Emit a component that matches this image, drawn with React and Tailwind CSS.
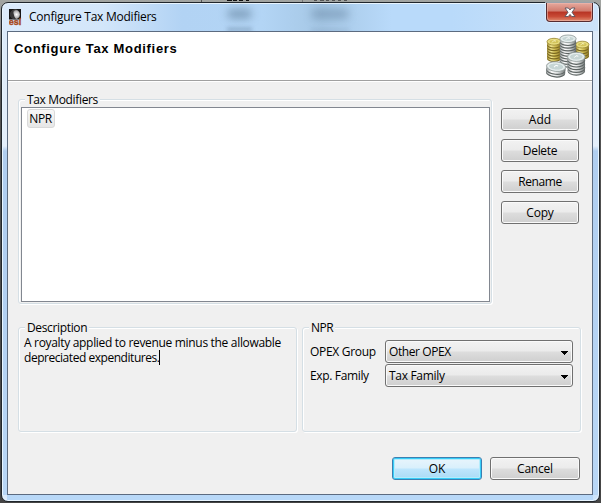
import React from "react";

const FONT = "font-['Open_Sans','Noto_Sans',sans-serif] text-[12px] leading-[15px] text-black whitespace-nowrap";

function Button({ children, className = "", primary = false, text = "" }) {
  const look = primary
    ? "border-[#3c7fb1] bg-[linear-gradient(#e9f5fc_0%,#d9f0fc_48%,#bee6fd_52%,#a9dbf5_100%)] shadow-[inset_0_0_0_1px_#37cdf8,inset_0_0_0_2px_#b4ecfc]"
    : "border-[#707070] bg-[linear-gradient(#f2f2f2_0%,#ebebeb_48%,#dddddd_52%,#cfcfcf_100%)] shadow-[inset_0_0_0_1px_#fafafa]";
  return (
    <button className={`flex h-[23px] items-center justify-center rounded-[3px] border ${look} ${className}`}>
      <span className={text}>{children}</span>
    </button>
  );
}

function Select({ value, text = "" }) {
  return (
    <div className="flex h-[23px] w-[188px] items-center justify-between rounded-[3px] border border-[#707070] bg-[linear-gradient(#f2f2f2_0%,#ebebeb_48%,#dddddd_52%,#cfcfcf_100%)] pl-[3px] pr-[3px] shadow-[inset_0_0_0_1px_#fafafa]">
      <span className={text}>{value}</span>
      <svg className="mt-[2px]" width="8" height="4" viewBox="0 0 8 4" shapeRendering="crispEdges">
        <path d="M0 0h7v1h-1v1h-1v1h-1v1h-1v-1h-1v-1h-1v-1h-1z" fill="#000" />
      </svg>
    </div>
  );
}

function Group({ label, className = "", text = "", children }) {
  return (
    <section className={`relative rounded-[3px] border border-[#d5dfe5] shadow-[inset_1px_1px_0_#fff,1px_1px_0_#fff] ${className}`}>
      <h2 className="absolute left-[6px] top-[-8px] bg-[#f0f0f0] px-[2px]">
        <span className={text}>{label}</span>
      </h2>
      {children}
    </section>
  );
}

function Stack({ x, y, rx, ry, count, gold }) {
  const side = gold ? "url(#goldSide)" : "url(#silverSide)";
  const edge = gold ? "#79671f" : "#5d6463";
  const layers = Array.from({ length: count }, (_, i) => count - i);
  return (
    <g>
      {layers.map((n) => (
        <g key={n}>
          <ellipse cx={x} cy={y + n * 2.7 + 0.8} rx={rx} ry={ry} fill={edge} />
          <ellipse cx={x} cy={y + n * 2.7 - 0.4} rx={rx} ry={ry} fill={side} />
        </g>
      ))}
      <ellipse cx={x} cy={y} rx={rx} ry={ry} fill={gold ? "#e5d873" : "#dce5e5"} stroke={gold ? "#978534" : "#8d9796"} strokeWidth=".8" />
      <ellipse cx={x} cy={y} rx={rx - 2} ry={ry - 1.3} fill={gold ? "#d2c35a" : "#c6d5d4"} stroke={gold ? "#f5eca0" : "#f7fbfb"} strokeWidth=".6" />
      <path d={`M${x - 2} ${y + 0.8}q1.5-3 4-1.4`} fill="none" stroke={gold ? "#f8f3bc" : "#fff"} strokeWidth="1" />
    </g>
  );
}

function Coins() {
  return (
    <svg width="46" height="46" viewBox="545 33 46 46">
      <defs>
        <linearGradient id="goldSide">
          <stop offset="0" stopColor="#a58f36" />
          <stop offset=".3" stopColor="#f1e68e" />
          <stop offset=".6" stopColor="#cfbb50" />
          <stop offset="1" stopColor="#8a7529" />
        </linearGradient>
        <linearGradient id="silverSide">
          <stop offset="0" stopColor="#969c9c" />
          <stop offset=".3" stopColor="#ffffff" />
          <stop offset=".6" stopColor="#dde0e0" />
          <stop offset="1" stopColor="#6c7271" />
        </linearGradient>
      </defs>
      <Stack x={582.3} y={44.6} rx={6.7} ry={3.4} count={4} gold />
      <Stack x={554} y={41.7} rx={7} ry={3.4} count={6} gold />
      <Stack x={568} y={38.8} rx={8.2} ry={3.8} count={9} />
      <Stack x={576.3} y={56.8} rx={8.8} ry={4.6} count={5} />
      <g transform="rotate(5 556 68)">
        <Stack x={556} y={66.6} rx={9.7} ry={4.8} count={2} />
      </g>
    </svg>
  );
}

function AppIcon() {
  return (
    <svg width="13" height="17" viewBox="0 0 13 17">
      <defs>
        <radialGradient id="orb" cx=".65" cy=".5" r=".6">
          <stop offset="0" stopColor="#fff" />
          <stop offset=".55" stopColor="#b4b4b4" />
          <stop offset="1" stopColor="#3c3c3c" />
        </radialGradient>
      </defs>
      <rect width="12" height="10.500" fill="#171717" />
      <circle cx="6" cy="5.5" r="4.9" fill="url(#orb)" />
      <path d="M6.5 1C3 2 5 5 5 6s1 3 2 4C3 10 1 8 1 5.500S4 1 6.500 1z" fill="#383838" />
      <text x="-.3" y="15.600" fill="#a8481a" stroke="#a8481a" strokeWidth=".4" fontFamily="Liberation Sans, sans-serif" fontWeight="bold" fontSize="9" textLength="12.600" lengthAdjust="spacingAndGlyphs">esi</text>
    </svg>
  );
}

function TitleBar() {
  return (
    <header className="relative flex h-[28px] items-start pl-[7px]">
      <div className="absolute left-[225px] top-[6px] h-[10px] w-[25px] rounded-full bg-[#486580]/45 blur-[4px]" />
      <div className="absolute left-[309px] top-[6px] h-[10px] w-[38px] rounded-full bg-[#486580]/35 blur-[4px]" />
      <div className="absolute left-[225px] top-[25px] h-[3px] w-[25px] bg-[#486580]/45 blur-[2px]" />
      <div className="absolute left-[309px] top-[26px] h-[2px] w-[38px] bg-[#486580]/25 blur-[2px]" />
      <div className="relative mt-[6px] w-[20px]"><AppIcon /></div>
      <h1 className="relative mt-[6px] tracking-[-0.25px]">Configure Tax Modifiers</h1>
      <button className="absolute right-[6px] top-0 flex h-[19px] w-[47px] items-center justify-center rounded-b-[4px] border border-t-0 border-[#562b30] bg-[linear-gradient(#e5a99e_0%,#d17b6d_45%,#b73424_50%,#c84b36_75%,#df8c70_100%)] shadow-[inset_0_0_0_1px_#efb9ad99,0_0_0_1px_#eaf4ff99]">
        <svg width="12" height="11" viewBox="0 0 12 11">
          <path d="M1 1h3.300l1.700 2 1.700-2H11L8 5.300l3 4.200H7.700L6 7.400 4.300 9.500H1l3-4.200z" fill="#fff" stroke="#59545d" strokeWidth=".9" />
        </svg>
      </button>
    </header>
  );
}

function BackdropStrip() {
  return (
    <div className="flex h-[2px] items-start">
      <i className="ml-[200px] h-[2px] w-px bg-[#555]" />
      <i className="ml-[25px] h-px w-[5px] bg-[#111]" />
      <i className="ml-px h-px w-[4px] bg-[#111]" />
      <i className="ml-[2px] h-px w-[4px] bg-[#111]" />
      <i className="ml-[3px] h-px w-[3px] bg-[#111]" />
      <i className="ml-[53px] h-[2px] w-px bg-[#777]" />
      <i className="ml-[11px] h-px w-[3px] bg-[#555]" />
      <i className="ml-[3px] h-px w-[4px] bg-[#555]" />
      <i className="ml-[2px] h-px w-[3px] bg-[#555]" />
      <i className="ml-[3px] h-px w-[3px] bg-[#555]" />
      <i className="ml-[3px] h-px w-[3px] bg-[#555]" />
      <i className="ml-[3px] h-px w-[3px] bg-[#555]" />
    </div>
  );
}

export default function App() {
  return (
    <div className={`h-[503px] w-[601px] overflow-hidden bg-[linear-gradient(#a2a5a2_0,#969696_30px,#555_90px,#454545_100%)] pl-px pr-px ${FONT}`}>
      <BackdropStrip />
      <div className="relative h-[500px] w-[599px] rounded-[7px] border border-[#20262c] bg-[linear-gradient(90deg,#dcebfb_0,#d3e6fa_100px,#b2d3f4_180px,#b3d5f5_260px,#a5c7e5_320px,#b9dafa_390px,#b9dafa_450px,#cde3f9_100%)] shadow-[inset_0_0_0_1px_#e8f5ff]">
        <div className="absolute left-[1px] top-[28px] h-[464px] w-[5px] bg-[linear-gradient(#dbe9f8_0,#e4effb_115px,#b0cef0_120px,#b0cef0_200px,#b9d7f6_100%)]" />
        <div className="absolute right-[1px] top-[28px] h-[464px] w-[5px] bg-[linear-gradient(#dbe9f8_0,#e4effb_115px,#b0cef0_120px,#b9d7f6_100%)]" />
        <div className="absolute bottom-[1px] left-[5px] h-[5px] w-[586px] bg-[#b8d8f8]" />
        <TitleBar />
        <main className="relative ml-[5px] h-[464px] w-[586px] border border-[#5c6b80] bg-[#f0f0f0]">
          <div className="flex h-[49px] justify-between border-b border-[#a0a0a0] bg-white">
            <h2 className="mt-[9px] pl-[6px] font-['Liberation_Sans',sans-serif] text-[13px] font-bold tracking-[0.68px]">Configure Tax Modifiers</h2>
            <div className="mr-px mt-px"><Coins /></div>
          </div>
          <div className="h-px bg-white" />
          <div className="flex pl-[10px] pt-[17px]">
            <Group label="Tax Modifiers" text="tracking-[-0.35px]" className="h-[205px] w-[474px] pl-[2px] pt-[7px]">
              <div className="h-[195px] w-[469px] border border-[#828790] bg-white pl-[5px] pt-px">
                <div className="flex h-[19px] w-[28px] items-center justify-center rounded-[3px] border border-[#d9d9d9] bg-[linear-gradient(#f8f8f8,#e6e6e6)]"><span className="-ml-px tracking-[-0.4px]">NPR</span></div>
              </div>
            </Group>
            <div className="ml-[9px] mt-[9px] flex flex-col gap-2">
              <Button className="w-[78px]">Add</Button>
              <Button className="w-[78px]" text="tracking-[-0.3px]">Delete</Button>
              <Button className="w-[78px]" text="tracking-[-0.4px]">Rename</Button>
              <Button className="w-[78px]" text="tracking-[-0.2px]">Copy</Button>
            </div>
          </div>
          <div className="flex gap-[5px] pl-[10px] pt-[23px]">
            <Group label="Description" text="tracking-[-0.35px]" className="h-[105px] w-[279px] pl-[5px] pt-[7px]">
              <p className="tracking-[-0.32px]">A royalty applied to revenue minus the allowable</p>
              <p className="flex"><span className="tracking-[-0.46px]">depreciated expenditures.</span><span className="h-[15px] w-px bg-black" /></p>
            </Group>
            <Group label="NPR" text="tracking-[-0.5px]" className="h-[105px] w-[279px] pl-[7px] pt-[12px]">
              <div className="grid grid-cols-[75px_188px] items-center gap-y-px">
                <span className="tracking-[-0.3px]">OPEX Group</span>
                <Select value="Other OPEX" text="tracking-[-0.4px]" />
                <span className="tracking-[-0.35px]">Exp. Family</span>
                <Select value="Tax Family" text="tracking-[-0.3px]" />
              </div>
            </Group>
          </div>
          <div className="mt-[25px] flex justify-end gap-2 pr-[12px]">
            <Button primary className="w-[90px]">OK</Button>
            <Button className="w-[90px]" text="tracking-[-0.2px]">Cancel</Button>
          </div>
        </main>
      </div>
    </div>
  );
}
